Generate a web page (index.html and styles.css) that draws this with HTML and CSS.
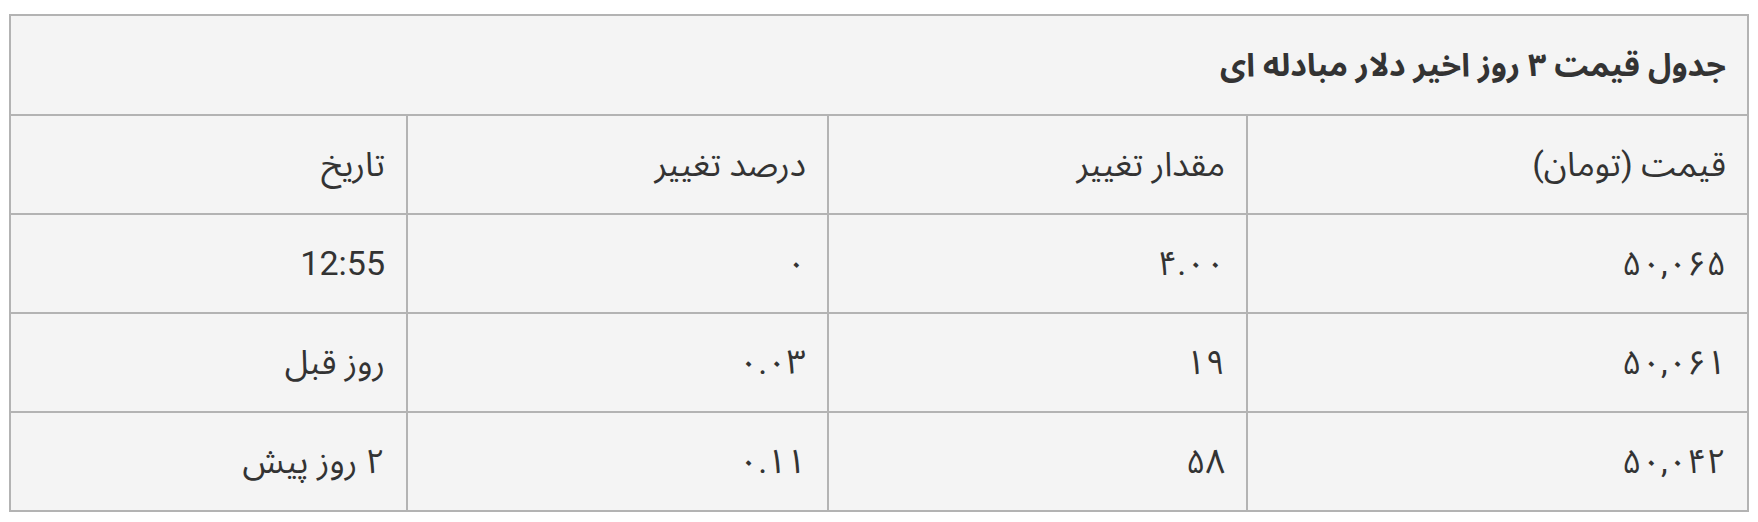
FILE: index.html
```html
<!DOCTYPE html>
<html lang="fa" dir="rtl">
<head>
<meta charset="utf-8">
<title>جدول قیمت دلار</title>
<link rel="stylesheet" href="styles.css">
</head>
<body>
<div class="wrap">
<table class="rates">
  <colgroup>
    <col class="c1">
    <col class="c2">
    <col class="c3">
    <col class="c4">
  </colgroup>
  <thead>
    <tr class="title-row"><th colspan="4">جدول قیمت ۳ روز اخیر دلار مبادله ای</th></tr>
  </thead>
  <tbody>
    <tr><td>قیمت (تومان)</td><td>مقدار تغییر</td><td>درصد تغییر</td><td>تاریخ</td></tr>
    <tr><td>۵۰,۰۶۵</td><td>۴.۰۰</td><td>۰</td><td>12:55</td></tr>
    <tr><td>۵۰,۰۶۱</td><td>۱۹</td><td>۰.۰۳</td><td>روز قبل</td></tr>
    <tr><td>۵۰,۰۴۲</td><td>۵۸</td><td>۰.۱۱</td><td>۲ روز پیش</td></tr>
  </tbody>
</table>
</div>
</body>
</html>
```

FILE: styles.css
```css
html, body {
  margin: 0;
  padding: 0;
  background: #ffffff;
}
.wrap {
  padding: 14px 9px 0 10px;
}
.rates {
  width: 100%;
  border-collapse: collapse;
  table-layout: fixed;
  background: #f4f4f4;
  border: 2px solid #b3b3b3;
  font-family: Roboto, "Noto Sans Arabic", "DejaVu Sans", sans-serif;
  color: #333333;
  font-size: 34px;
  line-height: 1.2;
}
.c1 { width: 501px; }
.c2 { width: 419px; }
.c3 { width: 421px; }
.c4 { width: 397px; }
.rates th,
.rates td {
  border: 2px solid #b3b3b3;
  text-align: right;
  padding: 0 21px;
  height: 97px;
  font-weight: normal;
  white-space: nowrap;
}
.title-row th {
  font-weight: bold;
  font-size: 32px;
  height: 98px;
}
```
